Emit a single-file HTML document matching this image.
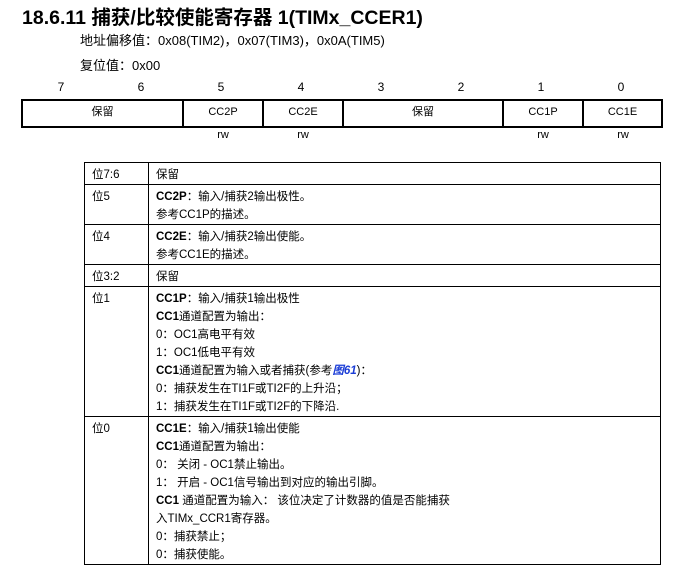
<!DOCTYPE html>
<html><head><meta charset="utf-8"><style>
*{margin:0;padding:0;box-sizing:border-box}
body{width:698px;height:576px;background:#fff;position:relative;font-family:"Liberation Sans","Noto Sans CJK SC",sans-serif;color:#000;overflow:hidden}
.a{position:absolute;white-space:nowrap}
.t{font-size:19.5px;font-weight:bold;left:22px;top:1px}
.s{font-size:13px;left:80px}
.n{font-size:12px;width:80px;text-align:center;top:80px}
.box{position:absolute;left:21px;top:99px;width:642px;height:29px;border:2px solid #000}
.c{position:absolute;top:102px;height:25px;font-size:11px;text-align:center;line-height:20px}
.v{position:absolute;top:101px;height:25px;width:2px;background:#000}
.rw{font-size:11px;top:129px;width:80px;text-align:center}
table{position:absolute;left:84px;top:162px;width:577px;border-collapse:collapse;font-size:11.5px}
td{border:1px solid #000;vertical-align:top;padding:3px 6px 0 7px;line-height:18px}
td:first-child{width:64px}
b{font-weight:bold}
.bl{color:#1a3cd6;font-weight:bold;font-style:italic}
</style></head><body>
<div class="a t">18.6.11 捕获/比较使能寄存器 1(TIMx_CCER1)</div>
<div class="a s" style="top:30px">地址偏移值：0x08(TIM2)，0x07(TIM3)，0x0A(TIM5)</div>
<div class="a s" style="top:55px">复位值：0x00</div>
<div class="a n" style="left:21px">7</div><div class="a n" style="left:101px">6</div>
<div class="a n" style="left:181px">5</div><div class="a n" style="left:261px">4</div>
<div class="a n" style="left:341px">3</div><div class="a n" style="left:421px">2</div>
<div class="a n" style="left:501px">1</div><div class="a n" style="left:581px">0</div>
<div class="box"></div>
<div class="c" style="left:23px;width:159px">保留</div>
<div class="v" style="left:182px"></div>
<div class="c" style="left:184px;width:78px">CC2P</div>
<div class="v" style="left:262px"></div>
<div class="c" style="left:264px;width:78px">CC2E</div>
<div class="v" style="left:342px"></div>
<div class="c" style="left:344px;width:158px">保留</div>
<div class="v" style="left:502px"></div>
<div class="c" style="left:504px;width:78px">CC1P</div>
<div class="v" style="left:582px"></div>
<div class="c" style="left:584px;width:77px">CC1E</div>
<div class="a rw" style="left:183px">rw</div><div class="a rw" style="left:263px">rw</div>
<div class="a rw" style="left:503px">rw</div><div class="a rw" style="left:583px">rw</div>
<table>
<tr><td>位7:6</td><td>保留</td></tr>
<tr><td>位5</td><td><b>CC2P</b>：输入/捕获2输出极性。<br>参考CC1P的描述。</td></tr>
<tr><td>位4</td><td><b>CC2E</b>：输入/捕获2输出使能。<br>参考CC1E的描述。</td></tr>
<tr><td>位3:2</td><td>保留</td></tr>
<tr><td>位1</td><td><b>CC1P</b>：输入/捕获1输出极性<br><b>CC1</b>通道配置为输出：<br>0：OC1高电平有效<br>1：OC1低电平有效<br><b>CC1</b>通道配置为输入或者捕获(参考<span class="bl">图61</span>)：<br>0：捕获发生在TI1F或TI2F的上升沿；<br>1：捕获发生在TI1F或TI2F的下降沿.</td></tr>
<tr><td>位0</td><td><b>CC1E</b>：输入/捕获1输出使能<br><b>CC1</b>通道配置为输出：<br>0： 关闭 - OC1禁止输出。<br>1： 开启 - OC1信号输出到对应的输出引脚。<br><b>CC1</b> 通道配置为输入： 该位决定了计数器的值是否能捕获<br>入TIMx_CCR1寄存器。<br>0：捕获禁止；<br>0：捕获使能。</td></tr>
</table>
</body></html>
